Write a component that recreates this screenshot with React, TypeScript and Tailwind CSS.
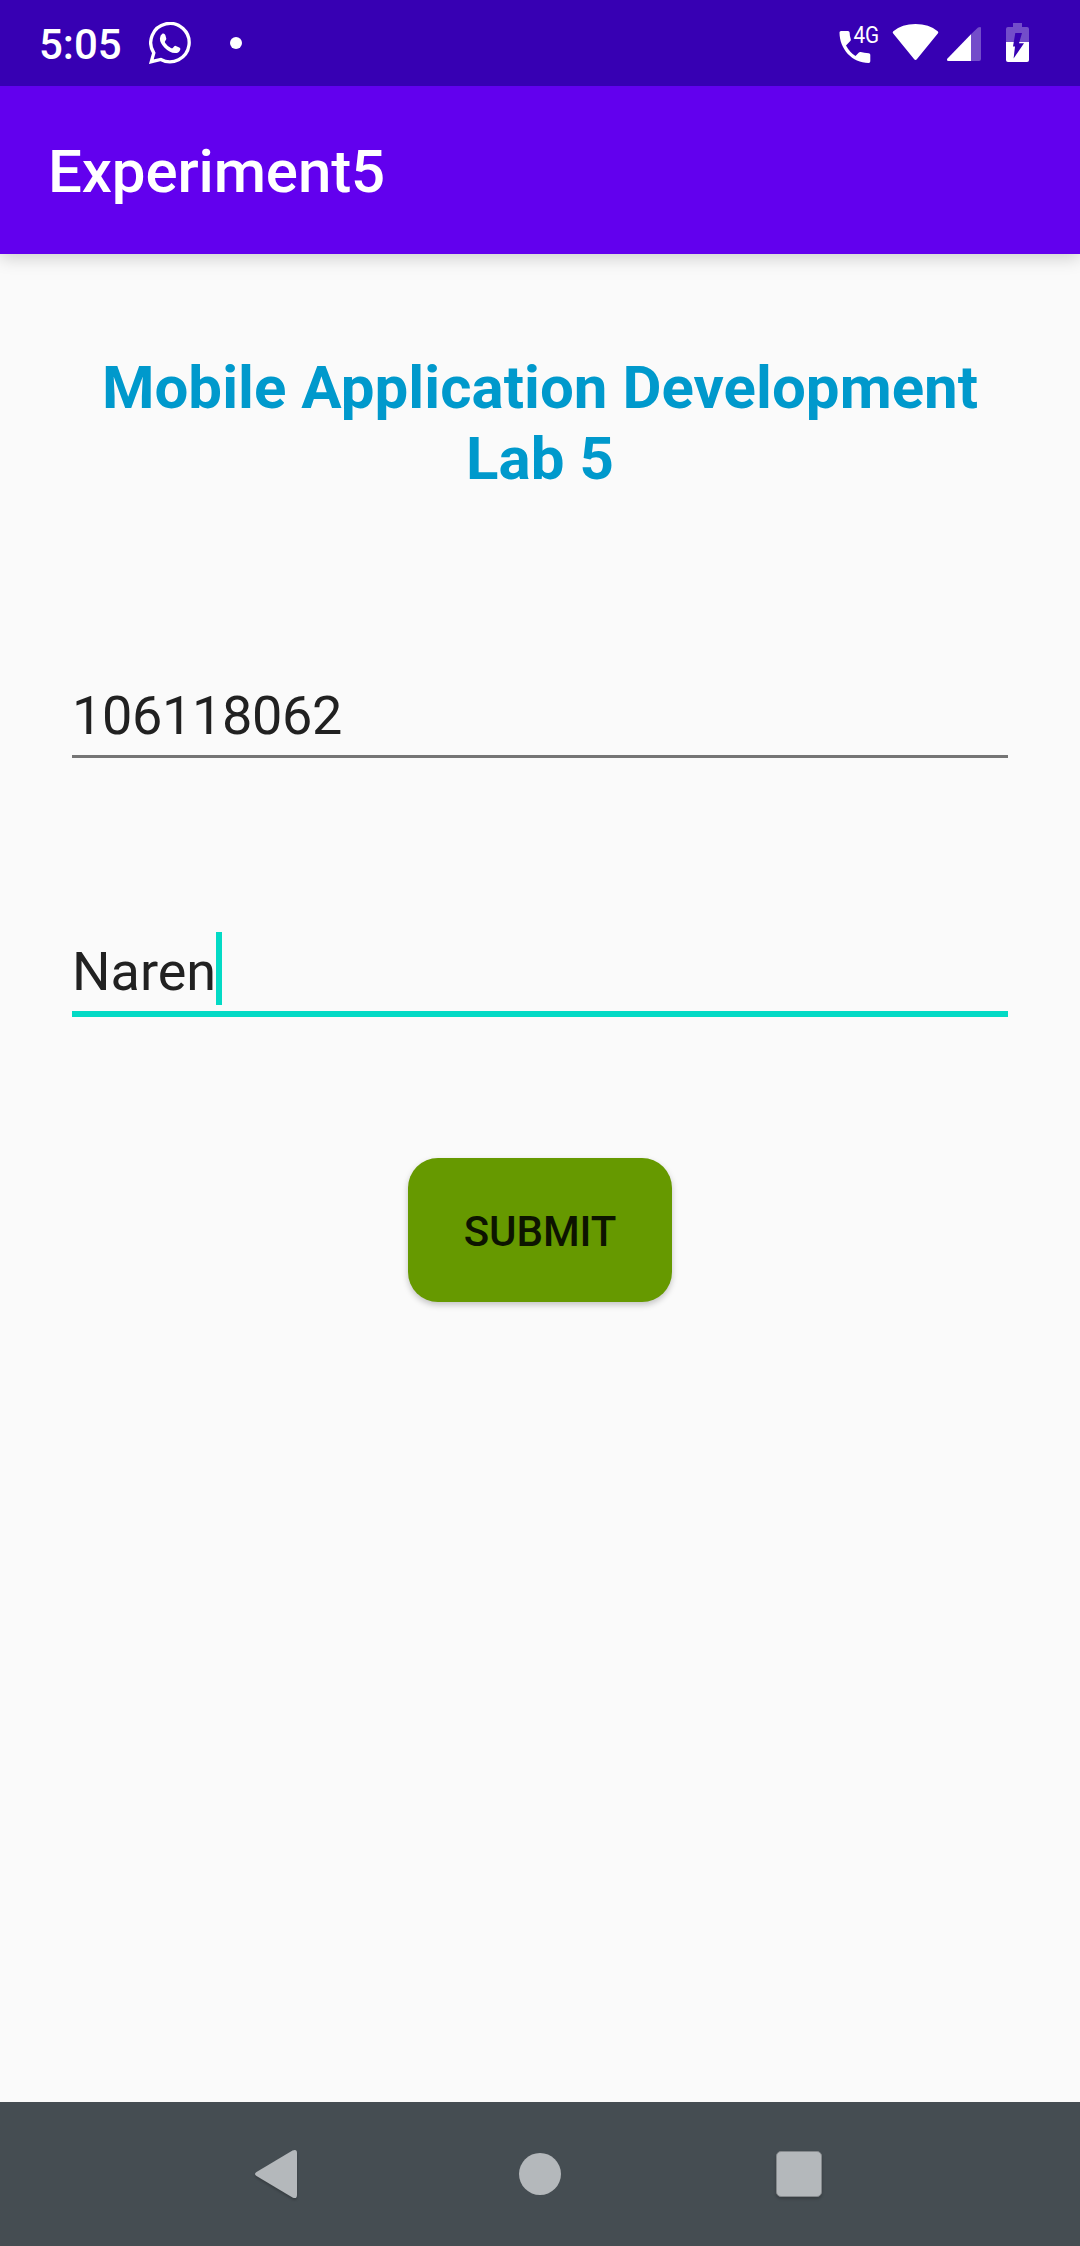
import React from "react";

function WhatsAppIcon() {
  return (
    <svg className="ml-[28px] h-[42px] w-[42px]" viewBox="0 0 42 42" fill="none">
      <path
        d="M2.300 39.700 4.800 31A19.200 19.200 0 1 1 11.800 37.500Z"
        stroke="#fff"
        strokeWidth="3.300"
      />
      <path
        d="M13.600 11.500Q15.600 11 16.300 13L17.300 16.500Q17.500 17.800 16 19.300Q15.600 20 16.200 21Q18.500 24.600 22.300 26.200Q23.300 26.600 24 25.800L25.300 24.200Q25.900 23.600 26.900 24L30.700 25.800Q31.600 26.300 31.300 27.400Q30.400 31 26 31.100Q20.500 30.800 15.300 25.500Q10.800 20.500 10.900 16.500Q11.100 12.800 13.600 11.500Z"
        fill="#fff"
      />
    </svg>
  );
}

function StatusIcons() {
  return (
    <svg className="h-[50px] w-[196px]" viewBox="836 18 196 50" fill="#fff">
      <path d="M841 31h7q1.500 0 1.600 1.500.1 3.500 1.200 6.800.3 1-.5 1.800l-4.300 4.300q4 7.200 9.500 10.600l3.400-3.400q.8-.8 1.800-.5 3.300 1 8 1.200 1.600.1 1.600 1.500v6.500q0 1.600-1.600 1.600C852 62.900 839.600 49 839.500 32.500q0-1.500 1.500-1.500Z" />
      <text
        x="0"
        y="0"
        transform="translate(853.4 43.200) scale(.88 1)"
        fontFamily="Roboto, sans-serif"
        fontSize="23.500"
      >
        4G
      </text>
      <path d="M893.300 31.200Q902 24 915.500 24T937.700 31.200Q938.800 32 938 33.200L917 59Q915.500 60.800 914 59L893 33.200Q892.200 32 893.300 31.200Z" />
      <path
        d="M971 34.300l7-6.700q3-1.500 3 .4V59q0 2-2 2h-8Z"
        fillOpacity=".3"
      />
      <path d="M971 34.300V61H948.500q-2.500-.5-1-2.500Z" />
      <path
        d="M1013 23h9v4h5q2 0 2 2v13h-23V29q0-2 2-2h5Z"
        fillOpacity=".3"
      />
      <path d="M1006 42h23v18q0 2-2 2h-19q-2 0-2-2Z" />
      <path
        d="M1015.300 33H1022L1019 43.200H1024L1013.600 58.500 1015 46.500H1013Z"
        fill="#3700b3"
      />
    </svg>
  );
}

function StatusBar() {
  return (
    <div className="relative z-10 flex h-[86px] items-start bg-[#3700b3] pr-[48px] pl-[39px]">
      <span className="mt-[20px] w-[82px] text-[42px] leading-[50px] font-medium whitespace-nowrap">
        5:05
      </span>
      <div className="mt-[22px] flex items-center">
        <WhatsAppIcon />
        <div className="ml-[39px] h-[12px] w-[12px] rounded-full bg-white" />
      </div>
      <div className="mt-[18px] ml-auto">
        <StatusIcons />
      </div>
    </div>
  );
}

function NavBar() {
  return (
    <nav className="flex h-[144px] shrink-0 items-center bg-[#454d52] pl-[246px]">
      <svg
        className="h-[60px] w-[60px] drop-shadow-[0_2px_1px_rgba(0,0,0,0.2)]"
        viewBox="0 0 60 60"
        fill="#b4b8bb"
      >
        <path d="M10.500 28 46.500 6.500Q51 4.500 51 9v42q0 4.500-4.500 2.500L10.500 32q-3-2 0-4Z" />
      </svg>
      <div className="ml-[213px] h-[42px] w-[42px] rounded-full bg-[#b4b8bb]" />
      <div className="ml-[215px] h-[46px] w-[46px] rounded-[5px] border border-[#85898c] bg-[#b4b8bb] shadow-[0_2px_3px_rgba(0,0,0,0.2)]" />
    </nav>
  );
}

export default function App() {
  return (
    <div className="flex h-[2246px] w-[1080px] flex-col bg-[#fafafa] font-[Roboto,sans-serif] text-white">
      <StatusBar />
      <header className="flex h-[168px] items-center bg-[#6200ee] pt-[4px] pl-[48px] shadow-[0_4px_16px_rgba(0,0,0,0.18)]">
        <h1 className="text-[60px] leading-[70px] font-medium tracking-[-0.12px]">
          Experiment5
        </h1>
      </header>
      <main className="flex flex-1 flex-col items-center">
        <h2 className="mt-[98px] text-center text-[60px] leading-[71px] font-bold tracking-[0.04px] text-[#0099cc]">
          Mobile Application Development
          <br />
          Lab 5
        </h2>
        <div className="mt-[189px] h-[75px] w-[936px] border-b-[3px] border-[#757575] text-[54px] leading-[65px] tracking-[-0.35px] text-[#212121]">
          106118062
        </div>
        <div className="mt-[174px] flex h-[85px] w-[936px] items-start border-b-[6px] border-[#03dac5] text-[54px] leading-[73px] text-[#212121]">
          <span className="w-[144px] pt-[3px]">Naren</span>
          <span className="h-[73px] w-[6px] bg-[#03dac5]" />
        </div>
        <button className="mt-[141px] flex h-[144px] w-[264px] items-center justify-center rounded-[30px] bg-[#669900] pt-[4px] text-[42px] leading-[50px] font-medium tracking-[-0.1px] text-[#0d1400] shadow-[0_3px_6px_rgba(0,0,0,0.22)]">
          SUBMIT
        </button>
      </main>
      <NavBar />
    </div>
  );
}
